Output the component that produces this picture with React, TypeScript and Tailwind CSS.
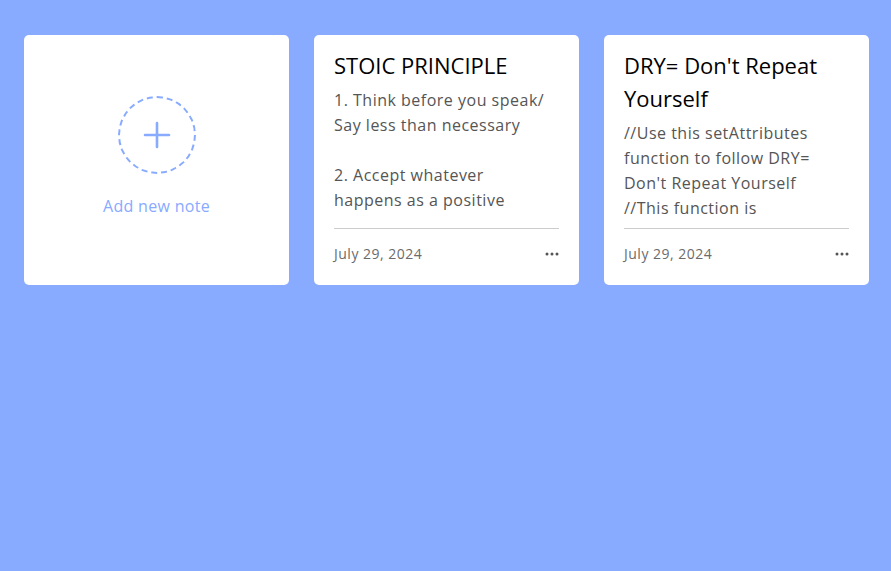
import React from 'react'

type Note = { title: string; lines: string[]; date: string }

const notes: Note[] = [
  {
    title: 'STOIC PRINCIPLE',
    lines: ['1. Think before you speak/', 'Say less than necessary', '', '2. Accept whatever', 'happens as a positive'],
    date: 'July 29, 2024',
  },
  {
    title: "DRY= Don't Repeat Yourself",
    lines: ['//Use this setAttributes', 'function to follow DRY=', "Don't Repeat Yourself", '//This function is'],
    date: 'July 29, 2024',
  },
]

function Dots() {
  return (
    <svg width="14" height="4" viewBox="0 0 14 4" className="text-[#555]">
      <circle cx="2" cy="2" r="1.5" fill="currentColor" />
      <circle cx="7" cy="2" r="1.5" fill="currentColor" />
      <circle cx="12" cy="2" r="1.5" fill="currentColor" />
    </svg>
  )
}

function NoteCard({ note }: { note: Note }) {
  return (
    <div className="w-[265px] h-[250px] shrink-0 bg-white rounded-[5px] flex flex-col px-5 pt-[14px] pb-[21px]">
      <h2 className="text-[22px] leading-[33px] font-medium text-black">{note.title}</h2>
      <div className="mt-[6px] flex-1 min-h-0 text-[16px] leading-[25px] tracking-[0.5px] text-[#555]">
        {note.lines.map((l, i) => (
          <p key={i} className="whitespace-nowrap">{l === '' ? '\u00a0' : l}</p>
        ))}
      </div>
      <div className="mt-[15px] border-t border-[#ccc] pt-[14px] flex items-center justify-between">
        <span className="text-[14px] leading-[21px] tracking-[0.5px] text-[#6b6b6b]">{note.date}</span>
        <Dots />
      </div>
    </div>
  )
}

export default function App() {
  return (
    <div className="min-h-[571px] w-full bg-[#88aaff] pl-6 pt-[35px]" style={{ fontFamily: '"Open Sans", "Noto Sans", sans-serif' }}>
      <div className="flex gap-[25px]">
        <div className="w-[265px] h-[250px] shrink-0 bg-white rounded-[5px] flex flex-col items-center justify-center pb-[7px]">
          <div className="w-[78px] h-[78px] rounded-full border-2 border-dashed border-[#88aaff] flex items-center justify-center">
            <svg width="28" height="28" viewBox="0 0 28 28" fill="none" stroke="#88aaff" strokeWidth="2.6" strokeLinecap="round">
              <path d="M14 2v24M2 14h24" />
            </svg>
          </div>
          <span className="mt-[20px] text-[16px] leading-[24px] font-medium tracking-[0.3px] text-[#88aaff]">Add new note</span>
        </div>
        {notes.map((n, i) => (
          <NoteCard key={i} note={n} />
        ))}
      </div>
    </div>
  )
}
